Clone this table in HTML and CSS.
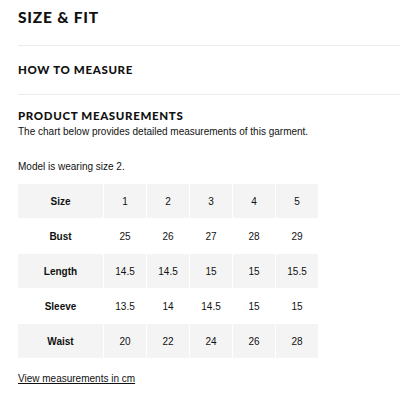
FILE: index.html
```html
<!DOCTYPE html>
<html>
<head>
<meta charset="utf-8">
<link rel="stylesheet" href="styles.css">
</head>
<body>
<div class="panel">
  <h2 class="title">SIZE &amp; FIT</h2>
  <div class="section">
    <h3 class="subtitle">HOW TO MEASURE</h3>
  </div>
  <div class="section last">
    <h3 class="subtitle">PRODUCT MEASUREMENTS</h3>
    <p class="text">The chart below provides detailed measurements of this garment.</p>
    <p class="text model">Model is wearing size 2.</p>
    <table class="chart">
      <tr class="shade"><th>Size</th><td>1</td><td>2</td><td>3</td><td>4</td><td>5</td></tr>
      <tr><th>Bust</th><td>25</td><td>26</td><td>27</td><td>28</td><td>29</td></tr>
      <tr class="shade"><th>Length</th><td>14.5</td><td>14.5</td><td>15</td><td>15</td><td>15.5</td></tr>
      <tr><th>Sleeve</th><td>13.5</td><td>14</td><td>14.5</td><td>15</td><td>15</td></tr>
      <tr class="shade"><th>Waist</th><td>20</td><td>22</td><td>24</td><td>26</td><td>28</td></tr>
    </table>
    <a class="link" href="#">View measurements in cm</a>
  </div>
</div>
</body>
</html>
```
FILE: styles.css
```css
html, body {
  margin: 0;
  padding: 0;
  background: #fff;
}
.panel {
  padding: 0 0 0 18px;
  font-family: "Liberation Sans", Arial, sans-serif;
  color: #111;
}
.title {
  margin: 0;
  padding-top: 7px;
  height: 38px;
  font-family: "Lato", sans-serif;
  font-weight: 900;
  font-size: 15.5px;
  letter-spacing: 0.8px;
  line-height: 20px;
  border-bottom: 1px solid #ececec;
}
.section {
  border-bottom: 1px solid #ececec;
}
.section.last {
  border-bottom: none;
}
.subtitle {
  margin: 0;
  font-family: "Lato", sans-serif;
  font-weight: 900;
  font-size: 11.5px;
  letter-spacing: 0.65px;
  line-height: 14px;
  padding: 17px 0 17px;
}
.section.last .subtitle {
  padding: 14px 0 3px;
}
.text {
  margin: 0;
  font-size: 10px;
  line-height: 12px;
}
.model {
  margin-top: 23px;
}
.chart {
  margin-top: 10px;
  border-collapse: separate;
  border-spacing: 1px;
  margin-left: -1px;
  font-size: 10px;
}
.chart th, .chart td {
  height: 34px;
  padding: 0;
  text-align: center;
  font-weight: normal;
}
.chart th {
  width: 85px;
  font-weight: bold;
}
.chart td {
  width: 42px;
}
.shade th, .shade td {
  background: #f4f4f4;
}
.link {
  display: inline-block;
  margin-top: 14px;
  font-size: 10px;
  color: #111;
  text-decoration: underline;
}
```
